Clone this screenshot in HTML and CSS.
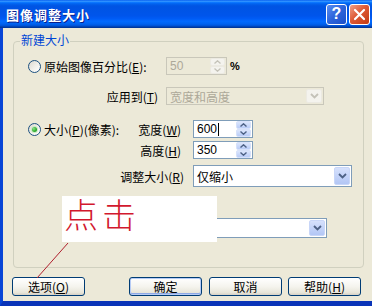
FILE: index.html
```html
<!DOCTYPE html>
<html lang="zh">
<head>
<meta charset="utf-8">
<link rel="stylesheet" href="styles.css">
</head>
<body>
<div class="window">
  <div class="titlebar">
    <span class="title">图像调整大小</span>
    <div class="tb-buttons">
      <span class="tb-btn help">?</span>
      <span class="tb-btn close"><svg width="13" height="13" viewBox="0 0 13 13"><path d="M2 2 L11 11 M11 2 L2 11" stroke="#fff" stroke-width="2.2" stroke-linecap="round"/></svg></span>
    </div>
  </div>
  <div class="body">
    <div class="group">
      <span class="legend">新建大小</span>
      <div class="row r1">
        <span class="rlabel"><span class="radio"></span>原始图像百分比(<u>E</u>):</span>
        <div class="spin disabled w61">
          <span class="val">50</span>
          <span class="sbtns"><span class="sb"><svg width="7" height="4" viewBox="0 0 7 4"><path d="M0.5 3.5 L3.5 0.8 L6.5 3.5" fill="none" stroke="#C4C2B8" stroke-width="1.3"/></svg></span><span class="sb"><svg width="7" height="4" viewBox="0 0 7 4"><path d="M0.5 0.5 L3.5 3.2 L6.5 0.5" fill="none" stroke="#C4C2B8" stroke-width="1.3"/></svg></span></span>
        </div>
        <span class="pct">%</span>
      </div>
      <div class="row r2">
        <span class="lbl apply">应用到(<u>T</u>)</span>
        <div class="combo disabled w158">
          <span class="val">宽度和高度</span>
          <span class="drop"><svg width="9" height="6" viewBox="0 0 9 6"><path d="M1 1 L4.5 4.5 L8 1" fill="none" stroke="#C4C2B8" stroke-width="1.8"/></svg></span>
        </div>
      </div>
      <div class="row r3">
        <span class="cell c3"><span class="rlabel-in"><span class="radio on"><span class="dot"></span></span>大小(<u>P</u>)(像素):</span><span>宽度(<u>W</u>)</span></span>
        <div class="spin w60">
          <span class="val">600<span class="caret"></span></span>
          <span class="sbtns"><span class="sb"><svg width="7" height="4" viewBox="0 0 7 4"><path d="M0.5 3.5 L3.5 0.8 L6.5 3.5" fill="none" stroke="#4D6185" stroke-width="1.4"/></svg></span><span class="sb"><svg width="7" height="4" viewBox="0 0 7 4"><path d="M0.5 0.5 L3.5 3.2 L6.5 0.5" fill="none" stroke="#4D6185" stroke-width="1.4"/></svg></span></span>
        </div>
      </div>
      <div class="row r4">
        <span class="cell c4"><span>高度(<u>H</u>)</span></span>
        <div class="spin w60">
          <span class="val">350</span>
          <span class="sbtns"><span class="sb"><svg width="7" height="4" viewBox="0 0 7 4"><path d="M0.5 3.5 L3.5 0.8 L6.5 3.5" fill="none" stroke="#4D6185" stroke-width="1.4"/></svg></span><span class="sb"><svg width="7" height="4" viewBox="0 0 7 4"><path d="M0.5 0.5 L3.5 3.2 L6.5 0.5" fill="none" stroke="#4D6185" stroke-width="1.4"/></svg></span></span>
        </div>
      </div>
      <div class="row r5">
        <span class="cell c5"><span>调整大小(<u>R</u>)</span></span>
        <div class="combo w159">
          <span class="val">仅缩小</span>
          <span class="drop"><svg width="9" height="6" viewBox="0 0 9 6"><path d="M1 1 L4.5 4.5 L8 1" fill="none" stroke="#4D6185" stroke-width="1.8"/></svg></span>
        </div>
      </div>
      <div class="row r6">
        <div class="combo w207">
          <span class="val"></span>
          <span class="drop"><svg width="9" height="6" viewBox="0 0 9 6"><path d="M1 1 L4.5 4.5 L8 1" fill="none" stroke="#4D6185" stroke-width="1.8"/></svg></span>
        </div>
      </div>
    </div>
    <div class="buttons">
      <span class="btn opt">选项(<u>O</u>)</span>
      <span class="btn ok">确定</span>
      <span class="btn cancel">取消</span>
      <span class="btn helpb">帮助(<u>H</u>)</span>
    </div>
  </div>
  <div class="note">点击</div>
  <svg class="pointer" width="372" height="306" viewBox="0 0 372 306"><line x1="68" y1="243" x2="37" y2="278" stroke="#B0202E" stroke-width="1"/></svg>
</div>
</body>
</html>
```
FILE: styles.css
```css
body {
  margin: 0;
  width: 372px;
  height: 306px;
  overflow: hidden;
  font-family: "Noto Sans CJK SC", "Liberation Sans", sans-serif;
  font-size: 12px;
  color: #000;
}
u { text-decoration: underline; text-underline-offset: 1px; }

.window {
  position: relative;
  width: 372px;
  height: 306px;
  display: flex;
  flex-direction: column;
}

.titlebar {
  height: 28px;
  flex: none;
  display: flex;
  align-items: center;
  justify-content: space-between;
  padding: 0 2px 0 6px;
  background: linear-gradient(to bottom, #0058EE 0%, #3593FF 4%, #288EFF 6%, #127DFF 8%, #036FFC 10%, #0262EE 14%, #0057E5 20%, #0054E3 24%, #0055EB 56%, #005BF5 66%, #026AFE 76%, #0062EF 86%, #0052D6 92%, #0040AB 96%, #003092 100%);
}
.title {
  color: #fff;
  font-weight: bold;
  font-size: 13px;
  letter-spacing: 1px;
  text-shadow: 1px 1px 0 #0A1E8A;
}
.tb-buttons { display: flex; gap: 2px; }
.tb-btn {
  width: 21px;
  height: 21px;
  box-sizing: border-box;
  border: 1px solid #fff;
  border-radius: 3px;
  display: flex;
  align-items: center;
  justify-content: center;
}
.help {
  background: linear-gradient(135deg, #5B8EF0 0%, #2B63DB 50%, #1C4FC8 100%);
  color: #fff;
  font-family: "Liberation Sans", sans-serif;
  font-weight: bold;
  font-size: 16px;
}
.close {
  background: linear-gradient(135deg, #F0A088 0%, #DE5A36 45%, #C23A13 100%);
}

.body {
  flex: 1;
  background: #ECE9D8;
  border-left: 3px solid #0845D6;
  border-bottom: 5px solid #0A34B8;
  display: flex;
  flex-direction: column;
}

.group {
  position: relative;
  margin: 13px 0 0 10px;
  width: 351px;
  height: 227px;
  box-sizing: border-box;
  border: 1px solid #D0D0BF;
  border-radius: 4px;
  padding-top: 15px;
}
.legend {
  position: absolute;
  top: -9px;
  left: 6px;
  padding: 0 1px;
  line-height: 14px;
  background: #ECE9D8;
  color: #0046D5;
}

.row {
  display: flex;
  align-items: center;
  height: 18px;
  padding-left: 14px;
}
.r2 { margin-top: 12px; }
.r3 { margin-top: 15px; }
.r4 { margin-top: 3px; }
.r5 { margin-top: 6px; height: 22px; }
.r6 { margin-top: 31px; height: 20px; padding-left: 106px; }

.rlabel { width: 138px; display: flex; align-items: center; }
.rlabel-in { display: flex; align-items: center; }
.radio {
  width: 13px;
  height: 13px;
  box-sizing: border-box;
  border: 1px solid #1C5180;
  border-radius: 50%;
  background: linear-gradient(135deg, #DCD9CF 0%, #F4F3EE 60%, #FFFFFF 100%);
  margin-right: 3px;
  display: flex;
  align-items: center;
  justify-content: center;
  flex: none;
}
.dot {
  width: 5px;
  height: 5px;
  border-radius: 50%;
  background: radial-gradient(circle at 35% 35%, #8EE08A 0%, #30B030 55%, #1A8E1A 100%);
  box-shadow: 0 0 0 1px #C8EAC4;
}

.lbl.apply { width: 130px; text-align: right; margin-right: 8px; }
.cell { display: flex; align-items: center; }
.c3 { width: 153px; justify-content: space-between; margin-right: 12px; }
.c4 { width: 153px; justify-content: flex-end; margin-right: 12px; }
.c5 { width: 156px; justify-content: flex-end; margin-right: 9px; }

.spin, .combo {
  display: flex;
  align-items: stretch;
  box-sizing: border-box;
  height: 100%;
  border: 1px solid #7F9DB9;
  background: #fff;
}
.w60 { width: 60px; }
.w61 { width: 61px; margin-left: 0; }
.w158 { width: 158px; }
.w159 { width: 159px; }
.w207 { width: 207px; }
.spin .val, .combo .val {
  flex: 1;
  display: flex;
  align-items: center;
  padding-left: 3px;
  font-family: "Liberation Sans", "Noto Sans CJK SC", sans-serif;
}
.combo .val { font-family: "Noto Sans CJK SC", sans-serif; }
.caret {
  display: inline-block;
  width: 1px;
  height: 13px;
  background: #000;
  margin-left: 1px;
}
.sbtns {
  width: 15px;
  display: flex;
  flex-direction: column;
  gap: 0;
  padding: 0 1px 0 0;
}
.sb {
  flex: 1;
  display: flex;
  align-items: center;
  justify-content: center;
  background: linear-gradient(to bottom, #DCE6FC, #B9CCF7);
  border: 1px solid #D6E1FA;
  border-radius: 2px;
  box-sizing: border-box;
}
.spin.disabled, .combo.disabled {
  border-color: #C9C7BA;
  background: #ECE9D8;
  color: #ACA899;
}
.spin.disabled .sb, .combo.disabled .drop {
  background: #F4F3EE;
  border-color: #ECEAE2;
}
.pct {
  margin-left: 3px;
  font-family: "Liberation Sans", sans-serif;
  font-weight: bold;
  font-size: 11px;
}
.drop {
  width: 16px;
  margin: 1px;
  display: flex;
  align-items: center;
  justify-content: center;
  background: linear-gradient(to bottom, #D6E1FC, #B2C6F5);
  border: 1px solid #C8D6F8;
  border-radius: 2px;
  box-sizing: border-box;
}

.buttons {
  display: flex;
  margin-top: 9px;
  padding-left: 9px;
  height: 19px;
}
.btn {
  width: 73px;
  height: 19px;
  box-sizing: border-box;
  border: 1px solid #003C74;
  border-radius: 3px;
  background: linear-gradient(to bottom, #FFFFFF 0%, #F5F4EE 50%, #E8E6DA 85%, #D6D0C5 100%);
  display: flex;
  align-items: center;
  justify-content: center;
  line-height: 1;
}
.ok {
  margin-left: 44px;
  box-shadow: inset 0 0 0 1px #B6CBF5, inset 0 -1px 0 1px #8EA9E6;
}
.cancel { margin-left: 7px; }
.helpb { margin-left: 6px; }

.note {
  position: absolute;
  left: 62px;
  top: 196px;
  width: 155px;
  height: 46px;
  background: #fff;
  color: #D2182E;
  font-size: 34px;
  font-weight: 300;
  line-height: 34px;
  letter-spacing: 4px;
  padding: 1px 0 0 2px;
  box-sizing: border-box;
}
.pointer {
  position: absolute;
  left: 0;
  top: 0;
  pointer-events: none;
}
```
